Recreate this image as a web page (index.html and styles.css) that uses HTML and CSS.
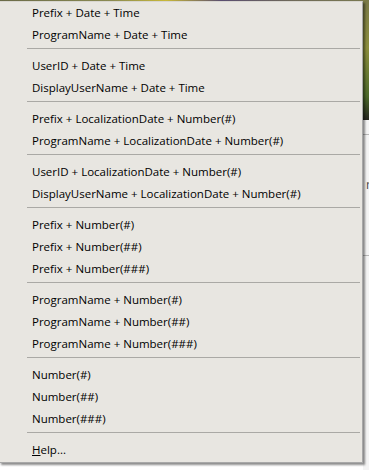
FILE: index.html
```html
<!DOCTYPE html>
<html>
<head>
<meta charset="utf-8">
<link rel="stylesheet" href="styles.css">
</head>
<body>
<div class="screen">
  <div class="backdrop">
    <div class="bd-top"></div>
    <div class="bd-right">
      <div class="bd-image"></div>
      <div class="bd-panel">
        <div class="bd-line"></div>
        <div class="bd-text">r</div>
        <div class="bd-line"></div>
      </div>
    </div>
  </div>
  <div class="menu">
    <div class="item">Prefix + Date + Time</div>
    <div class="item">ProgramName + Date + Time</div>
    <div class="sep"></div>
    <div class="item">UserID + Date + Time</div>
    <div class="item">DisplayUserName + Date + Time</div>
    <div class="sep"></div>
    <div class="item">Prefix + LocalizationDate + Number(#)</div>
    <div class="item">ProgramName + LocalizationDate + Number(#)</div>
    <div class="sep"></div>
    <div class="item">UserID + LocalizationDate + Number(#)</div>
    <div class="item">DisplayUserName + LocalizationDate + Number(#)</div>
    <div class="sep"></div>
    <div class="item">Prefix + Number(#)</div>
    <div class="item">Prefix + Number(##)</div>
    <div class="item">Prefix + Number(###)</div>
    <div class="sep"></div>
    <div class="item">ProgramName + Number(#)</div>
    <div class="item">ProgramName + Number(##)</div>
    <div class="item">ProgramName + Number(###)</div>
    <div class="sep"></div>
    <div class="item">Number(#)</div>
    <div class="item">Number(##)</div>
    <div class="item">Number(###)</div>
    <div class="sep"></div>
    <div class="item"><span class="acc">H</span>elp...</div>
  </div>
</div>
</body>
</html>
```
FILE: styles.css
```css
html, body {
  margin: 0;
  padding: 0;
  background: #ffffff;
}
.screen {
  position: relative;
  width: 369px;
  height: 470px;
  overflow: hidden;
}
.backdrop {
  position: absolute;
  inset: 0;
  display: flex;
  flex-direction: column;
}
.bd-top {
  height: 2px;
  background: linear-gradient(90deg, #6a6a48 0%, #8a8a52 30%, #c8b838 45%, #5a4e70 60%, #6f6a58 80%, #7a7a50 100%);
}
.bd-right {
  position: absolute;
  top: 0;
  right: 0;
  width: 6px;
  height: 100%;
  display: flex;
  flex-direction: column;
}
.bd-image {
  height: 120px;
  background: linear-gradient(180deg, #7a7a48 0%, #8c8e3c 40%, #4c6a2a 80%, #262620 100%);
}
.bd-panel {
  flex: 1;
  background: #f4f4f4;
  display: flex;
  flex-direction: column;
  padding-top: 14px;
}
.bd-line {
  height: 1px;
  background: #b8b8b8;
}
.bd-text {
  font-family: "Open Sans", sans-serif;
  font-size: 12px;
  line-height: 20px;
  color: #444;
  margin: 40px 0 60px;
  padding-left: 3px;
}
.menu {
  position: absolute;
  top: 1px;
  left: -1px;
  width: 364px;
  height: 462px;
  box-sizing: border-box;
  background: #e8e6e1;
  border: 1px solid #a8a8a8;
  border-top-color: #d8d6d0;
  box-shadow: 2px 2px 2px rgba(0, 0, 0, 0.45);
  padding: 0;
  font-family: "Open Sans", sans-serif;
  font-size: 11.5px;
  color: #000000;
}
.item {
  height: 22px;
  line-height: 22px;
  padding-left: 32px;
  white-space: nowrap;
}
.sep {
  height: 9px;
  box-sizing: border-box;
  display: flex;
  align-items: flex-start;
  padding: 2px 2px 0 27px;
}
.sep::before {
  content: "";
  flex: 1;
  height: 1px;
  background: #aaa9a5;
}
.acc {
  text-decoration: underline;
}
```
